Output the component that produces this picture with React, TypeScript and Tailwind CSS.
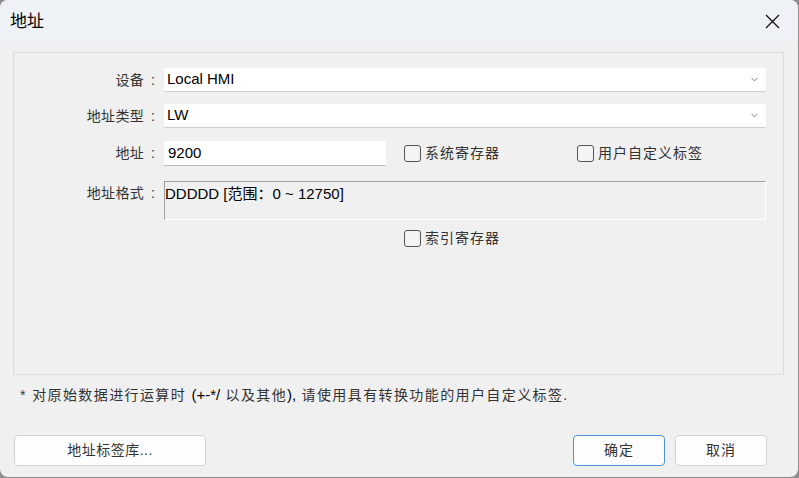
import { ChevronDown } from 'lucide-react'

const cjk = "font-['Liberation_Sans','Noto_Sans_CJK_SC',sans-serif]"

function Checkbox({ label }: { label: string }): React.JSX.Element {
  return (
    <label className="flex items-center gap-[4px] text-[14px] tracking-[1px] text-[#333]">
      <span className="h-[17px] w-[17px] rounded-[3px] border border-[#555] bg-[#f4f4f4]" />
      <span>{label}</span>
    </label>
  )
}

function Label({ text, className = '' }: { text: string; className?: string }): React.JSX.Element {
  return (
    <div className={`w-[150px] pr-[2px] text-right text-[14px] tracking-[0.3px] text-[#333] ${className}`}>
      {text}
      <span className="inline-block w-[18px] text-center">:</span>
    </div>
  )
}

function Select({ value }: { value: string }): React.JSX.Element {
  return (
    <div className="flex h-[24px] w-[602px] items-center justify-between rounded-[2px] border-b border-[#cfcfcf] bg-white pl-[3px] pr-[6px] text-[15px] text-black">
      <span>{value}</span>
      <ChevronDown className="h-[11px] w-[11px] text-[#555]" strokeWidth={1.6} />
    </div>
  )
}

export default function App(): React.JSX.Element {
  return (
    <div className={`h-[478px] w-[799px] bg-[#8d8d8d] ${cjk}`}>
      <div className="flex h-[477px] w-[798px] flex-col overflow-hidden rounded-[8px] bg-[#f0f0f0]">
        {/* title bar */}
        <div className="flex h-[43px] items-center justify-between bg-[#eef1f6] pl-[10px] pr-[18px]">
          <span className="text-[17px] text-black">地址</span>
          <svg width="15" height="15" viewBox="0 0 15 15">
            <path d="M1 1 L14 14 M14 1 L1 14" stroke="#111" strokeWidth="1.3" fill="none" />
          </svg>
        </div>

        <div className="flex flex-col pl-[13px]">
          {/* group box */}
          <div className="mt-[9px] flex h-[323px] w-[771px] flex-col border border-[#dcdcdc] pt-[15px]">
            <div className="flex h-[24px] items-center">
              <Label text="设备" />
              <Select value="Local HMI" />
            </div>
            <div className="mt-[12px] flex h-[24px] items-center">
              <Label text="地址类型" />
              <Select value="LW" />
            </div>
            <div className="mt-[13px] flex h-[25px] items-center">
              <Label text="地址" />
              <div className="flex h-[25px] w-[222px] items-center border-b border-[#bdbdbd] bg-white pl-[4px] text-[15px] text-black">
                9200
              </div>
              <div className="ml-[18px] w-[173px]">
                <Checkbox label="系统寄存器" />
              </div>
              <Checkbox label="用户自定义标签" />
            </div>
            <div className="mt-[15px] flex h-[39px] items-start">
              <Label text="地址格式" className="pt-[2px]" />
              <div className="h-[39px] w-[602px] border-b border-l border-r border-t border-b-white border-l-[#a0a0a0] border-r-white border-t-[#a0a0a0] pt-[1px] text-[15px] text-black">
                DDDDD [范围：0 ~ 12750]
              </div>
            </div>
            <div className="mt-[10px] flex h-[17px] items-center pl-[390px]">
              <Checkbox label="索引寄存器" />
            </div>
          </div>

          {/* note */}
          <div className="mt-[10px] pl-[7px] text-[14px] leading-[20px] tracking-[1.4px] text-[#333]">
            * 对原始数据进行运算时 <span className="text-[15px] tracking-normal text-black">(+-*/</span> 以及其他
            <span className="text-[15px] tracking-normal text-black">),</span> 请使用具有转换功能的用户自定义标签.
          </div>

          {/* buttons */}
          <div className="ml-[1px] mt-[30px] flex w-[753px] justify-between">
            <button
              type="button"
              className="h-[31px] w-[192px] rounded-[4px] border border-[#d3d3d3] bg-[#fdfdfd] text-[14px] tracking-[0.5px] text-[#333]"
            >
              地址标签库...
            </button>
            <div className="flex gap-[10px]">
              <button
                type="button"
                className="h-[31px] w-[92px] rounded-[4px] border border-[#4f92d8] bg-[#fdfdfd] text-[14px] tracking-[1px] text-[#333]"
              >
                确定
              </button>
              <button
                type="button"
                className="h-[31px] w-[92px] rounded-[4px] border border-[#d3d3d3] bg-[#fdfdfd] text-[14px] tracking-[1px] text-[#333]"
              >
                取消
              </button>
            </div>
          </div>
        </div>
      </div>
    </div>
  )
}
